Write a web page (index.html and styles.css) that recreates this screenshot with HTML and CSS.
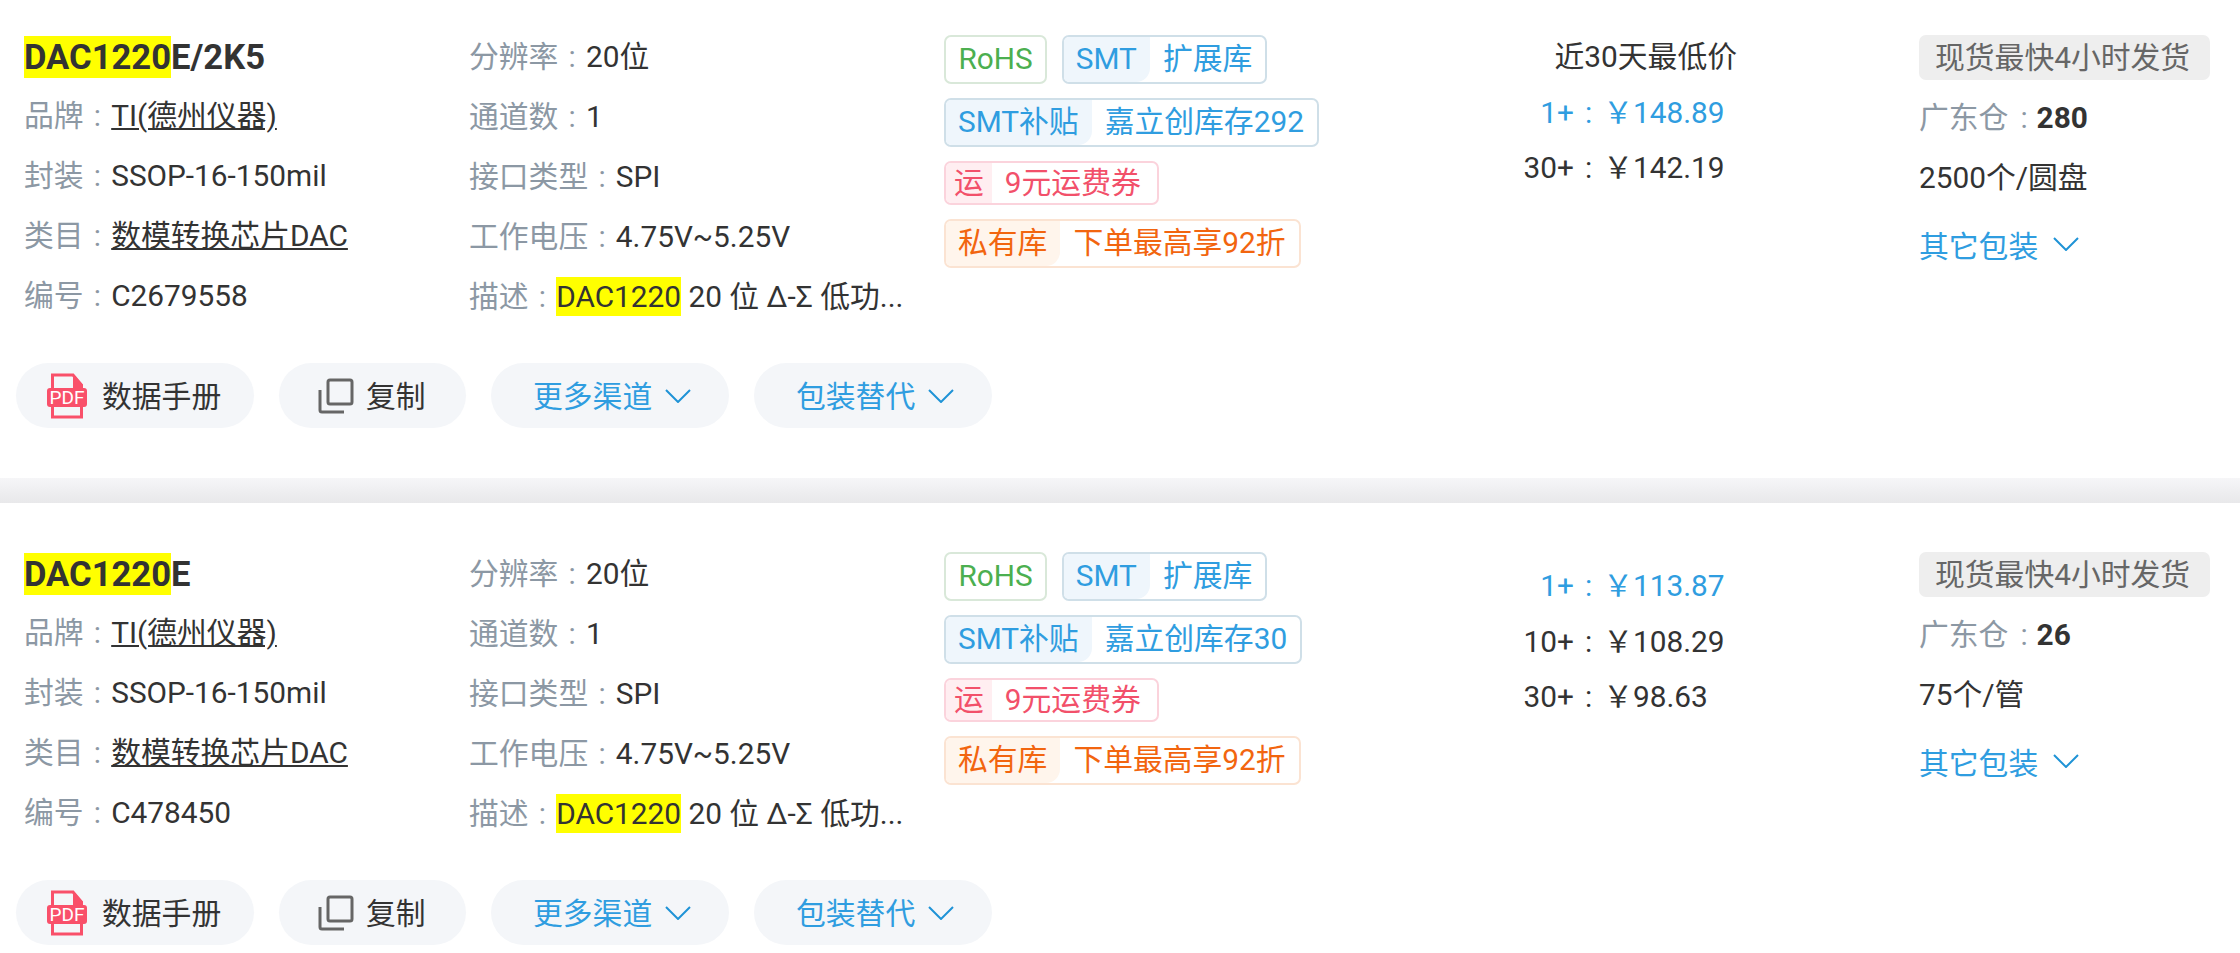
FILE: index.html
```html
<!DOCTYPE html>
<html lang="zh-CN">

<head>
    <meta charset="UTF-8">
    <meta name="viewport" content="width=device-width, initial-scale=1.0">
    <title>DAC1220</title>
    <link rel="stylesheet" href="styles.css">
</head>

<body>
    <!-- 第一个商品 -->
    <section class="item">
        <div class="cols">
            <div class="col col-base">
                <div class="title"><mark>DAC1220</mark>E/2K5</div>
                <div class="row"><span class="label">品牌</span><span class="colon">:</span><a class="link">TI(德州仪器)</a></div>
                <div class="row"><span class="label">封装</span><span class="colon">:</span>SSOP-16-150mil</div>
                <div class="row"><span class="label">类目</span><span class="colon">:</span><a class="link">数模转换芯片DAC</a></div>
                <div class="row"><span class="label">编号</span><span class="colon">:</span>C2679558</div>
            </div>
            <div class="col col-param">
                <div class="row"><span class="label">分辨率</span><span class="colon">:</span>20位</div>
                <div class="row"><span class="label">通道数</span><span class="colon">:</span>1</div>
                <div class="row"><span class="label">接口类型</span><span class="colon">:</span>SPI</div>
                <div class="row"><span class="label">工作电压</span><span class="colon">:</span>4.75V~5.25V</div>
                <div class="row"><span class="label">描述</span><span class="colon">:</span><mark>DAC1220</mark> 20 位 Δ-Σ 低功...</div>
            </div>
            <div class="col col-tags">
                <div class="tag-line">
                    <span class="tag green"><span class="tag-body">RoHS</span></span>
                    <span class="tag blue"><span class="tag-head">SMT</span><span class="tag-body">扩展库</span></span>
                </div>
                <div class="tag-line">
                    <span class="tag blue"><span class="tag-head">SMT补贴</span><span class="tag-body">嘉立创库存292</span></span>
                </div>
                <div class="tag-line tag-line-low">
                    <span class="tag red"><span class="tag-head">运</span><span class="tag-body">9元运费券</span></span>
                </div>
                <div class="tag-line">
                    <span class="tag orange"><span class="tag-head">私有库</span><span class="tag-body">下单最高享92折</span></span>
                </div>
            </div>
            <div class="col col-price">
                <div class="price-head">近30天最低价</div>
                <div class="price first"><span class="qty">1+</span><span class="colon">:</span><span>￥148.89</span></div>
                <div class="price"><span class="qty">30+</span><span class="colon">:</span><span>￥142.19</span></div>
            </div>
            <div class="col col-stock">
                <div class="ship">现货最快4小时发货</div>
                <div class="stock"><span class="label">广东仓</span><span class="colon">:</span><b>280</b></div>
                <div class="stock">2500个/圆盘</div>
                <div class="more">其它包装<svg class="arrow" viewBox="0 0 26 14"><path d="M1 1L13 13L25 1"/></svg></div>
            </div>
        </div>
        <div class="actions">
            <a class="pill pill-pdf">
                <svg class="icon-pdf" viewBox="0 0 40 46"><path class="pdf-page" d="M5.5 16V2H26L34.5 12V16M5.5 34V44H34.500V34"/><path class="pdf-fold" d="M26 1L36 12V15H26Z"/><rect class="pdf-fold" y="15" width="40" height="19" rx="3"/><text class="pdf-text" x="20" y="31">PDF</text></svg>
                数据手册
            </a>
            <a class="pill pill-copy">
                <svg class="icon-copy" viewBox="0 0 36 36"><rect x="10" y="2" width="24" height="24" rx="2"/><path d="M2 12V32Q2 34 4 34H26"/></svg>
                复制
            </a>
            <a class="pill pill-blue">更多渠道<svg class="arrow" viewBox="0 0 26 14"><path d="M1 1L13 13L25 1"/></svg></a>
            <a class="pill pill-blue">包装替代<svg class="arrow" viewBox="0 0 26 14"><path d="M1 1L13 13L25 1"/></svg></a>
        </div>
    </section>

    <div class="gap"></div>

    <!-- 第二个商品 -->
    <section class="item">
        <div class="cols">
            <div class="col col-base">
                <div class="title"><mark>DAC1220</mark>E</div>
                <div class="row"><span class="label">品牌</span><span class="colon">:</span><a class="link">TI(德州仪器)</a></div>
                <div class="row"><span class="label">封装</span><span class="colon">:</span>SSOP-16-150mil</div>
                <div class="row"><span class="label">类目</span><span class="colon">:</span><a class="link">数模转换芯片DAC</a></div>
                <div class="row"><span class="label">编号</span><span class="colon">:</span>C478450</div>
            </div>
            <div class="col col-param">
                <div class="row"><span class="label">分辨率</span><span class="colon">:</span>20位</div>
                <div class="row"><span class="label">通道数</span><span class="colon">:</span>1</div>
                <div class="row"><span class="label">接口类型</span><span class="colon">:</span>SPI</div>
                <div class="row"><span class="label">工作电压</span><span class="colon">:</span>4.75V~5.25V</div>
                <div class="row"><span class="label">描述</span><span class="colon">:</span><mark>DAC1220</mark> 20 位 Δ-Σ 低功...</div>
            </div>
            <div class="col col-tags">
                <div class="tag-line">
                    <span class="tag green"><span class="tag-body">RoHS</span></span>
                    <span class="tag blue"><span class="tag-head">SMT</span><span class="tag-body">扩展库</span></span>
                </div>
                <div class="tag-line">
                    <span class="tag blue"><span class="tag-head">SMT补贴</span><span class="tag-body">嘉立创库存30</span></span>
                </div>
                <div class="tag-line tag-line-low">
                    <span class="tag red"><span class="tag-head">运</span><span class="tag-body">9元运费券</span></span>
                </div>
                <div class="tag-line">
                    <span class="tag orange"><span class="tag-head">私有库</span><span class="tag-body">下单最高享92折</span></span>
                </div>
            </div>
            <div class="col col-price no-head">
                <div class="price first"><span class="qty">1+</span><span class="colon">:</span><span>￥113.87</span></div>
                <div class="price"><span class="qty">10+</span><span class="colon">:</span><span>￥108.29</span></div>
                <div class="price"><span class="qty">30+</span><span class="colon">:</span><span>￥98.63</span></div>
            </div>
            <div class="col col-stock">
                <div class="ship">现货最快4小时发货</div>
                <div class="stock"><span class="label">广东仓</span><span class="colon">:</span><b>26</b></div>
                <div class="stock">75个/管</div>
                <div class="more">其它包装<svg class="arrow" viewBox="0 0 26 14"><path d="M1 1L13 13L25 1"/></svg></div>
            </div>
        </div>
        <div class="actions">
            <a class="pill pill-pdf">
                <svg class="icon-pdf" viewBox="0 0 40 46"><path class="pdf-page" d="M5.5 16V2H26L34.5 12V16M5.5 34V44H34.500V34"/><path class="pdf-fold" d="M26 1L36 12V15H26Z"/><rect class="pdf-fold" y="15" width="40" height="19" rx="3"/><text class="pdf-text" x="20" y="31">PDF</text></svg>
                数据手册
            </a>
            <a class="pill pill-copy">
                <svg class="icon-copy" viewBox="0 0 36 36"><rect x="10" y="2" width="24" height="24" rx="2"/><path d="M2 12V32Q2 34 4 34H26"/></svg>
                复制
            </a>
            <a class="pill pill-blue">更多渠道<svg class="arrow" viewBox="0 0 26 14"><path d="M1 1L13 13L25 1"/></svg></a>
            <a class="pill pill-blue">包装替代<svg class="arrow" viewBox="0 0 26 14"><path d="M1 1L13 13L25 1"/></svg></a>
        </div>
    </section>
</body>

</html>
```

FILE: styles.css
```css
* {
    box-sizing: border-box;
}

body {
    margin: 0;
    height: 953px;
    overflow: hidden;
    background: #fff;
    color: #333;
    font-family: Roboto, "Noto Sans CJK SC", sans-serif;
    font-size: 29.8px;
}

mark {
    padding: 2px 0;
    background: #ff0;
    color: inherit;
}

/* 商品块 */
.item {
    padding: 41px 16px 0 16px;
    height: 450px;
}
.item:first-child {
    padding-top: 27px;
    height: 478px;
}

.gap {
    height: 25px;
    background: linear-gradient(#f6f6f8, #e8e8ea);
}

.cols {
    display: flex;
    height: 300px;
}

.col-base {
    width: 453px;
    padding-left: 8px;
}
.col-param {
    width: 475px;
}
.col-tags {
    width: 530px;
}
.col-price {
    width: 445px;
    padding-right: 182px;
    text-align: right;
}
.col-stock {
    width: 291px;
}

/* 参数行 */
.title {
    height: 58.5px;
    line-height: 60px;
    font-size: 34.6px;
    font-weight: 700;
}
.title mark {
    padding: 1px 0;
}
.row {
    height: 60px;
    line-height: 60px;
    white-space: nowrap;
}
.label {
    color: #8c98a4;
}
.colon {
    margin: 0 10.2px;
    color: #8c98a4;
}
.link {
    color: #333;
    text-decoration: underline;
}

/* 标签 */
.tag-line {
    display: flex;
    gap: 14.5px;
    margin-top: 8px;
    margin-bottom: 14px;
}
.tag-line-low .tag {
    height: 44px;
    line-height: 39px;
}
.tag {
    display: flex;
    height: 49px;
    border: 2px solid;
    border-radius: 7px;
    overflow: hidden;
    line-height: 43px;
}
.tag-head {
    padding: 0 13px 0 12px;
    border-bottom-right-radius: 14px;
}
.tag-body {
    padding: 0 13px;
}
.green .tag-body {
    padding: 0 12.5px;
}
.green {
    color: #4caf50;
    border-color: #d9e8d9;
}
.blue {
    color: #2f9de0;
    border-color: #cfdfe8;
}
.blue .tag-head {
    background: #eff6fc;
}
.red {
    color: #f2506a;
    border-color: #fbd3dc;
}
.red .tag-head {
    padding: 0 8px;
    background: #ffeef1;
    border-radius: 0;
}
.red .tag-body {
    padding-right: 16px;
}
.orange {
    color: #f2650f;
    border-color: #fbe3d2;
}
.orange .tag-head {
    background: #fff5ec;
}

/* 价格 */
.price-head {
    height: 57.5px;
    line-height: 60px;
}
.price {
    display: flex;
    height: 55.5px;
    line-height: 55.5px;
}
.price .qty {
    width: 100px;
    text-align: right;
}
.price .colon {
    margin: 0 11px 0 11px;
    color: inherit;
}
.price.first {
    color: #2f9de0;
}
.no-head {
    padding-top: 14px;
}

/* 库存 */
.ship {
    height: 45px;
    line-height: 45px;
    margin-top: 8px;
    padding: 0 16px;
    background: #eee;
    border-radius: 7px;
    color: #666;
    white-space: nowrap;
}
.stock {
    height: 60px;
    line-height: 60px;
    margin-top: 8px;
    white-space: nowrap;
}
.stock + .stock {
    margin-top: 0;
}
.stock .colon {
    margin: 0 9px 0 12px;
}
.stock b {
    font-weight: 700;
}
.more {
    display: flex;
    align-items: center;
    gap: 15px;
    margin-top: 6px;
    height: 60px;
    color: #2f9de0;
}

.arrow {
    width: 26px;
    height: 14px;
    fill: none;
    stroke: #1f93d6;
    stroke-width: 2;
}

/* 底部按钮 */
.actions {
    display: flex;
    gap: 25px;
    margin-top: 36px;
}
.pill {
    display: flex;
    align-items: center;
    height: 65px;
    width: 238px;
    padding-bottom: 3px;
    border-radius: 33px;
    background: #f4f6f9;
    color: #333;
}
.pill svg {
    margin-top: 3px;
}
.pill-pdf {
    gap: 15px;
    padding-left: 31px;
}
.pill-copy {
    width: 187px;
    gap: 12px;
    padding-left: 39px;
}
.pill-blue {
    color: #2f9de0;
    gap: 13px;
    padding-left: 42px;
}
.icon-pdf {
    width: 40px;
    height: 46px;
}
.pdf-page {
    fill: none;
    stroke: #f9506a;
    stroke-width: 3;
}
.pdf-fold {
    fill: #f9506a;
}
.pdf-text {
    fill: #fff;
    font-size: 19px;
    text-anchor: middle;
}
.icon-copy {
    width: 36px;
    height: 36px;
    fill: none;
    stroke: #666;
    stroke-width: 3;
}
```
